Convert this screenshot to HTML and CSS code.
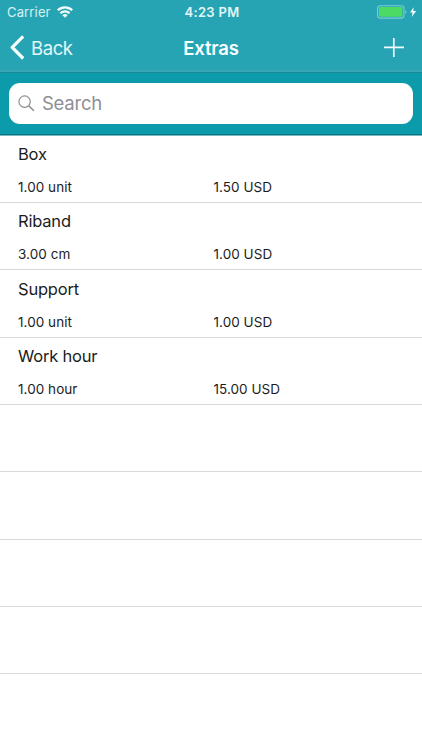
FILE: index.html
```html
<!DOCTYPE html>
<html lang="en">
<head>
<meta charset="utf-8">
<title>Extras</title>
<link rel="stylesheet" href="styles.css">
</head>
<body>
<header class="top">
  <div class="status">
    <div class="status-left">
      <span class="carrier">Carrier</span>
      <svg class="wifi" width="16" height="12" viewBox="0 0 16 12" fill="none" stroke="#f2fcfc" stroke-width="2.3"><path d="M.8 4.3a10.2 10.2 0 0 1 14.4 0"/><path d="M3.4 7.3a6.5 6.5 0 0 1 9.2 0"/><path d="M8 11.8 5.4 9.2a3.7 3.7 0 0 1 5.2 0z" fill="#f2fcfc" stroke="none"/></svg>
    </div>
    <span class="time">4:23 PM</span>
    <div class="status-right">
      <svg width="40" height="14" viewBox="0 0 40 14"><rect x=".6" y=".7" width="26.3" height="12.4" rx="2.6" fill="none" stroke="#7dcbd2" stroke-width="1.1"/><rect x="2" y="2.1" width="23.4" height="9.6" rx="1.2" fill="#4cda64"/><path d="M28.2 4.9c1.7.7 1.7 3.3 0 4z" fill="#7dcbd2"/><path d="M36.6 2.2 33 7.5h2.6l-1 4.6 4.6-6h-2.8z" fill="#f2fcfc"/></svg>
    </div>
  </div>
  <nav class="nav">
    <a class="back"><svg width="15" height="25" viewBox="0 0 15 25" fill="none" stroke="#f7ffff" stroke-width="3.2" stroke-linejoin="round"><path d="M13.2 1.3 2.2 12.4l11 11.1"/></svg><span>Back</span></a>
    <h1 class="title">Extras</h1>
    <a class="add"><svg width="20" height="20" viewBox="0 0 20 20" stroke="#f2fcfc" stroke-width="1.7"><path d="M0 9.4h20M9.8 0v19"/></svg></a>
  </nav>
</header>
<div class="searchbar">
  <div class="field">
    <svg width="17" height="17" viewBox="0 0 17 17" fill="none" stroke="#8e8e93" stroke-width="1.2"><circle cx="6.6" cy="6.6" r="5.7"/><path d="m10.7 10.7 5.2 5.1" stroke-width="1.6"/></svg>
    <span class="placeholder">Search</span>
  </div>
</div>
<main class="list">
  <section class="row"><h2>Box</h2><p><span>1.00 unit</span><span>1.50 USD</span></p></section>
  <section class="row"><h2>Riband</h2><p><span>3.00 cm</span><span>1.00 USD</span></p></section>
  <section class="row"><h2>Support</h2><p><span>1.00 unit</span><span>1.00 USD</span></p></section>
  <section class="row"><h2>Work hour</h2><p><span>1.00 hour</span><span>15.00 USD</span></p></section>
  <div class="row"></div>
  <div class="row"></div>
  <div class="row"></div>
  <div class="row"></div>
</main>
</body>
</html>
```
FILE: styles.css
```css
* { box-sizing: border-box; }
body {
  margin: 0;
  background: #fff;
  color: #1c1c1c;
  font-family: Inter, "Liberation Sans", sans-serif;
}
.top {
  height: 73px;
  background: #27a4b4;
  border-bottom: 1px solid #188b99;
  box-shadow: inset 0 -2px #38a8b6;
  color: #f7ffff;
}
.status {
  display: grid;
  grid-template-columns: 1fr auto 1fr;
  align-items: center;
  height: 24px;
  padding: 0 5px 0 7px;
}
.status-left { display: flex; align-items: center; gap: 6px; }
.carrier { font-size: 13px; letter-spacing: 0.15px; color: #d9f3f4; }
.time { font-size: 13px; font-weight: 600; letter-spacing: 0.3px; color: #e2f7f8; }
.status-right { display: flex; justify-content: flex-end; }
.nav {
  display: grid;
  grid-template-columns: 1fr auto 1fr;
  align-items: center;
  height: 47px;
  padding: 0 10px;
}
.back {
  display: flex;
  align-items: center;
  gap: 6px;
  font-size: 18.5px;
  letter-spacing: -0.4px;
  color: #e2f8f9;
}
.title { margin: 0; font-size: 18.5px; font-weight: 600; letter-spacing: -0.15px; }
.add { display: flex; justify-content: flex-end; padding-right: 8px; }
.nav svg, .status svg { display: block; }
.searchbar {
  height: 63px;
  padding: 10px 9px 0;
  background: #0b9bab;
  border-bottom: 1px solid #7bbcc3;
  box-shadow: inset 0 -1px #087481;
}
.field {
  display: flex;
  align-items: center;
  gap: 7px;
  height: 41px;
  padding: 0 9px 1px;
  border-radius: 11px;
  background: #fff;
}
.placeholder { font-size: 18.5px; letter-spacing: -0.25px; color: #8e8e93; }
.row {
  height: 67px;
  padding: 7px 18px 0;
  border-bottom: 1px solid #d9d9db;
}
.row:nth-child(3n) { height: 68px; padding-top: 8px; }
.row h2 {
  margin: 0;
  font-size: 16.5px;
  font-weight: 400;
  line-height: 22px;
  letter-spacing: -0.2px;
}
.row p {
  display: grid;
  grid-template-columns: 195.5px 1fr;
  margin: 13px 0 0;
  font-size: 13.5px;
  line-height: 18px;
  letter-spacing: 0.05px;
}
```
